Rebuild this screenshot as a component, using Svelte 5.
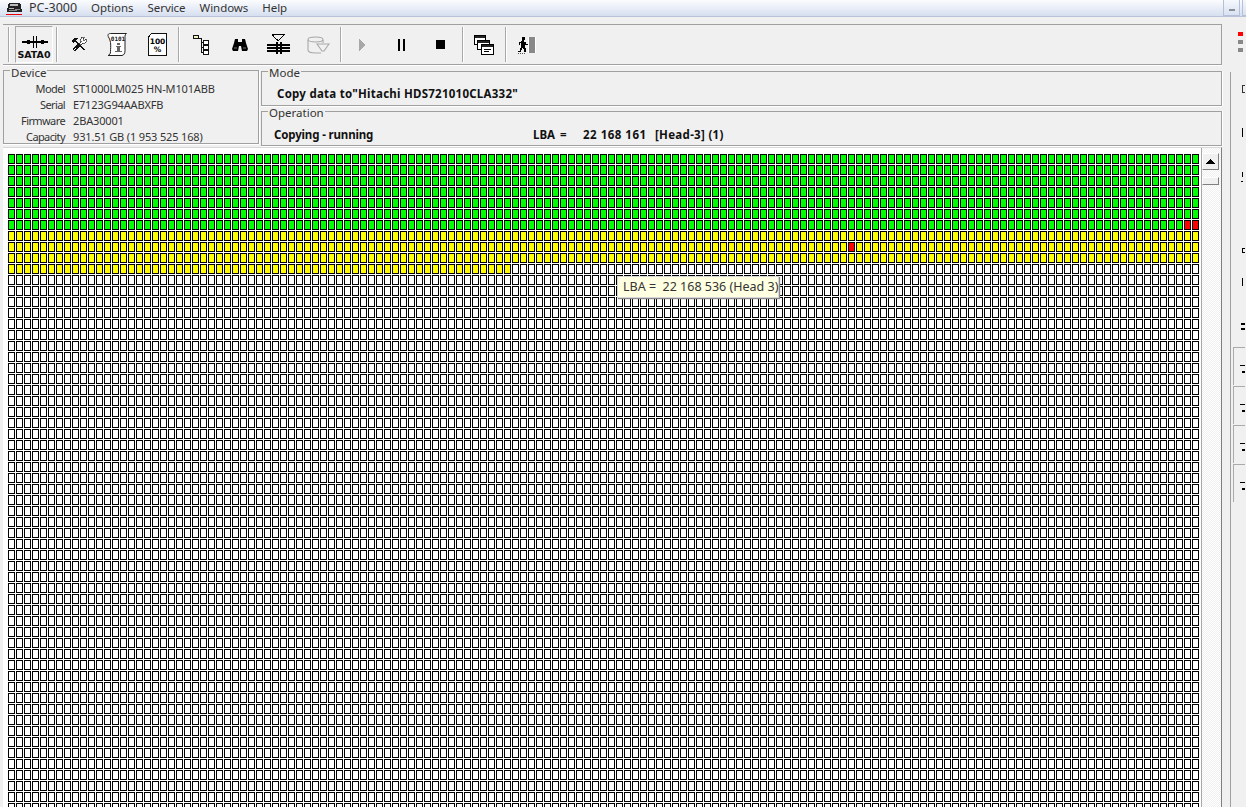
<script>
  const ROWS = 60;
  const COLS = 149;
  const cellClass = (r, c) => {
    if ((r === 6 && c >= 147) || (r === 8 && c === 105)) return 'r';
    if (r <= 6) return 'g';
    if (r <= 9 || (r === 10 && c <= 62)) return 'y';
    return '';
  };
  const cells = [];
  for (let r = 0; r < ROWS; r++) for (let c = 0; c < COLS; c++) cells.push(cellClass(r, c));
  const device = [
    ['Model', 'ST1000LM025 HN-M101ABB'],
    ['Serial', 'E7123G94AABXFB'],
    ['Firmware', '2BA30001'],
    ['Capacity', '931.51 GB (1 953 525 168)']
  ];
  const menu = ['Options', 'Service', 'Windows', 'Help'];
</script>

<div class="page">
  <header class="menubar">
    <svg class="logo" width="17" height="16" viewBox="0 0 17 16" shape-rendering="crispEdges">
      <path d="M3 3h11v1h1v5h1v3H1V8h1V4h1z" fill="#222"/>
      <path d="M4 4h8v2H4zM3 8h5v1H3z" fill="#bbb"/>
      <path d="M9 9h5v1H9zM3 10h8v1H3z" fill="#888"/>
      <rect x="0" y="14" width="16" height="1" fill="#e00"/>
    </svg>
    <span class="app-name">PC-3000</span>
    {#each menu as m}<span class="menu-item">{m}</span>{/each}
    <div class="winbtns">
      <div class="winbtn"><i></i></div>
      <div class="winbtn last"></div>
    </div>
  </header>

  <div class="workspace">
    <main class="main">
      <div class="toolbar">
        <div class="sep first"></div>
        <button class="tool sata">
          <svg width="36" height="18" viewBox="0 0 36 18" shape-rendering="crispEdges">
            <rect x="6" y="8" width="26" height="2" fill="#000"/>
            <rect x="11" y="7" width="3" height="4" fill="#000"/>
            <rect x="25" y="7" width="3" height="4" fill="#000"/>
            <rect x="17" y="3" width="1" height="12" fill="#000"/>
            <rect x="20" y="3" width="1" height="12" fill="#000"/>
          </svg>
          <span>SATA0</span>
        </button>
        <div class="sep"></div>

        <div class="tool">
          <svg width="16" height="15" viewBox="0 0 16 15" shape-rendering="crispEdges">
            <path d="M1 3h1V2h1V1h4v1H6v1H5v1h1v1h1v1h1v1h1v1h1v1h1v1h1v1h1v1h1v1h-2v-1h-1v-1h-1v-1H9V9H8V8H7V7H6V6H5V5H3v1H2V5H1z" fill="#111"/>
            <path d="M10 0h3v1h-1v2h2V2h1v3h-1v1h-3v1h-1v1H9V7H8V6h1V5h1V4H9V2h1z" fill="#fff" stroke="#111" stroke-width=".6"/>
            <path d="M7 8h1v1h1v1H8v1H7v1H6v1H5v1H3v-1H2v-2h1v-1h1V9h1V8h1V7h1z" fill="#111"/>
            <path d="M3 13h1v-1h1v-1H4v1H3z" fill="#fff"/>
          </svg>
        </div>
        <div class="tool">
          <svg width="22" height="23" viewBox="0 0 22 23">
            <path d="M3.500 .5h16c-1.500 1-1.500 2-1.500 4v13c0 3-1 4.500-3 5H1c1.500-.5 2.500-1.500 2.500-4 0-3 .5-5 0-9S1 4 1 2.500 2 .5 3.500 .5z" fill="#fff" stroke="#222"/>
            <text x="11" y="7.500" class="tiny">0101</text>
            <rect x="10" y="10" width="3" height="2" fill="#666"/>
            <rect x="9" y="13" width="5" height="1" fill="#666"/>
            <rect x="10" y="14" width="3" height="4" fill="#666"/>
            <rect x="8" y="18" width="7" height="1" fill="#666"/>
          </svg>
        </div>
        <div class="tool">
          <svg width="20" height="24" viewBox="0 0 20 24" shape-rendering="crispEdges">
            <path d="M4.500 .5h15v22h-18V4z" fill="#fff" stroke="#111"/>
            <text x="10.500" y="11" class="pct">100</text>
            <text x="10.500" y="19" class="pct">%</text>
          </svg>
        </div>
        <div class="sep"></div>

        <div class="tool">
          <svg width="16" height="20" viewBox="0 0 16 20" shape-rendering="crispEdges">
            <path d="M.5 .5h5v3h-5z" fill="#f3f3c0" stroke="#111"/>
            <path d="M5 3h3v1H5zM8 3h1v15H8zM9 7h2v1H9zM9 12h2v1H9zM9 17h2v1H9z" fill="#111"/>
            <path d="M10.500 5.500h5v4h-5zM10.500 10.500h5v4h-5zM10.500 15.500h5v4h-5z" fill="#fff" stroke="#111"/>
          </svg>
        </div>
        <div class="tool">
          <svg width="16" height="13" viewBox="0 0 16 13">
            <path d="M3 1h3v3h4V1h3l1 4 2 6-1 2H10L9 8H7L6 13H1L0 11l2-6z" fill="#000"/>
            <path d="M2 10h3M11 10h3" stroke="#777"/>
          </svg>
        </div>
        <div class="tool">
          <svg width="23" height="21" viewBox="0 0 23 21" shape-rendering="crispEdges">
            <path d="M5 0h13v1h-1v1h-1v1h-1v1h-1v1h-1v1h-1v1h-2V6H9V5H8V4H7V3H6V2H5z" fill="#000"/>
            <path d="M7 1h9v1h-1v1h-1v1h-1v1h-1v1h-1V5H9V4H8V3H7z" fill="#f0f0f0"/>
            <rect y="10" width="23" height="2" fill="#000"/>
            <rect y="13" width="23" height="2" fill="#000"/>
            <rect y="16" width="23" height="2" fill="#000"/>
            <rect x="9" y="8" width="2" height="12" fill="#000"/>
            <rect x="13" y="8" width="2" height="12" fill="#000"/>
          </svg>
        </div>
        <div class="tool disk">
          <svg width="23" height="18" viewBox="0 0 23 18" fill="none" stroke="#a8a8a8" stroke-width="1.1">
            <path d="M1 4v10c0 2 4 3 8 3h5"/>
            <ellipse cx="8.500" cy="3.500" rx="7.500" ry="2.500" fill="#f0f0f0"/>
            <path d="M16 4v3"/>
            <path d="M10 8h12l-5 7h-2z" fill="#f0f0f0"/>
          </svg>
        </div>
        <div class="sep"></div>

        <div class="tool">
          <svg width="8" height="12" viewBox="0 0 8 12" shape-rendering="crispEdges">
            <path d="M0 0h1v1h1v1h1v1h1v1h1v1h1v2H5v1H4v1H3v1H2v1H1v1H0z" fill="#a8a8a8"/>
          </svg>
        </div>
        <div class="tool">
          <svg width="8" height="12" viewBox="0 0 8 12" shape-rendering="crispEdges">
            <rect width="2" height="12" fill="#000"/>
            <rect x="5" width="2" height="12" fill="#000"/>
          </svg>
        </div>
        <div class="tool"><div class="stop"></div></div>
        <div class="sep"></div>

        <div class="tool narrow">
          <svg width="20" height="20" viewBox="0 0 20 20" shape-rendering="crispEdges">
            <g fill="#fff" stroke="#000">
              <rect x=".5" y=".5" width="11" height="9"/>
              <rect x="3.500" y="5.500" width="12" height="9"/>
              <rect x="7.500" y="9.500" width="12" height="10"/>
            </g>
            <rect x="1" y="1" width="10" height="2" fill="#222"/>
            <rect x="4" y="6" width="11" height="2" fill="#222"/>
            <rect x="8" y="10" width="11" height="2" fill="#222"/>
            <path d="M10 14h7v1h-7zM10 16h5v1h-5z" fill="#000"/>
          </svg>
        </div>
        <div class="sep"></div>

        <div class="tool narrow">
          <svg width="20" height="18" viewBox="0 0 20 18" shape-rendering="crispEdges">
            <rect x="11" y="1" width="8" height="16" fill="#fff"/>
            <rect x="12" y="1" width="6" height="16" class="dither"/>
            <path d="M5 1h3v3H7v2h2v2h2v1H8v3h1v4H7v-3H6v-1H5v2H4v2H1v-1h2v-3h1V7H3v2H2V6h2V5h1z" fill="#000"/>
            <path d="M1 17h1M3 17h1M5 17h1M7 17h1" stroke="#555"/>
          </svg>
        </div>
      </div>

      <section class="info">
        <div class="box device">
          <div class="legend dev-legend">Device</div>
          {#each device as [k, v]}
            <div class="dev-row"><span class="dev-k">{k}</span><span class="dev-v">{v}</span></div>
          {/each}
        </div>
        <div class="status">
          <div class="box mode">
            <div class="legend">Mode</div>
            <div class="mode-text">Copy data to"Hitachi HDS721010CLA332"</div>
          </div>
          <div class="box operation">
            <div class="legend">Operation</div>
            <div class="op-text">
              <span class="op-state">Copying - running</span>
              <span class="op-lba">LBA =</span>
              <span class="op-num">22 168 161</span>
              <span class="op-head">[Head-3] (1)</span>
            </div>
          </div>
        </div>
      </section>

      <section class="map">
        <div class="grid">
          {#each cells as c}<b class={c}></b>{/each}
        </div>
        <div class="scroll">
          <div class="sb-btn"><svg width="9" height="5" viewBox="0 0 9 5" shape-rendering="crispEdges"><path d="M4 0h1v1h1v1h1v1h1v1h1v1H0V4h1V3h1V2h1V1h1z"/></svg></div>
          <div class="sb-thumb"></div>
        </div>
        <div class="tooltip">LBA =  22 168 536 (Head 3)</div>
      </section>
    </main>

    <aside class="side">
      <svg width="15" height="790" viewBox="0 0 15 790" shape-rendering="crispEdges">
        <rect x="8" y="15" width="5" height="4" fill="#f00"/>
        <rect x="8" y="23" width="5" height="4" fill="#888"/>
        <rect x="8" y="31" width="5" height="4" fill="#888"/>
        <path d="M13 68h2v1h-2v6h2v1h-3v-8z" fill="#333"/>
        <rect x="12" y="111" width="1" height="9" fill="#000"/>
        <path d="M12 155h1v9h-2v1h2z" fill="#000"/>
        <path d="M12 231h3v1h-2v3h2v1h-3z" fill="#000"/>
        <rect x="12" y="261" width="1" height="8" fill="#000"/>
        <rect x="11" y="306" width="4" height="2" fill="#000"/>
        <rect x="11" y="311" width="4" height="2" fill="#000"/>
        {#each [330, 369, 408, 447] as y}
          <path d={`M3.500 ${y + 38}V${y}.5H15`} fill="none" stroke="#aaa"/>
          <rect x="10" y={y + 18} width="5" height="1" fill="#000"/>
          <rect x="12" y={y + 24} width="3" height="2" fill="#000"/>
        {/each}
      </svg>
    </aside>
  </div>
</div>

<style>
  :global(body) { margin: 0; background: #f0f0f0; }
  .page {
    width: 1246px; height: 807px; overflow: hidden; background: #f0f0f0;
    font: 12px/16px "Noto Sans", sans-serif; color: #222;
  }
  .menubar {
    height: 16px; display: flex; align-items: center;
    background: linear-gradient(#fbfcfe, #d6dff0); border-bottom: 1px solid #b9c2d8;
    padding-left: 6px; color: #333;
  }
  .logo { flex: none; }
  .app-name { margin: 0 14px 0 6px; font-size: 12.500px; }
  .menu-item { margin-right: 14px; font-size: 11.500px; letter-spacing: -.05px; }
  .winbtns { margin-left: auto; display: flex; height: 17px; gap: 2px; }
  .winbtn {
    width: 17px; height: 16px; box-sizing: border-box; border: 1px solid #b5bfd6; border-top: 0;
    background: linear-gradient(#f6f8fc, #d8e2f2); display: flex; justify-content: center; align-items: flex-end;
  }
  .winbtn.last { width: 4px; border-right: 0; }
  .winbtn i { width: 6px; height: 2px; background: #8a8f99; margin-bottom: 4px; }

  .workspace { display: flex; height: 790px; }
  .main { width: 1222px; padding-left: 3px; box-sizing: border-box; flex: none; }

  .toolbar {
    height: 41px; margin-top: 7px; box-sizing: border-box; width: 1219px;
    border: 1px solid #a0a0a0; border-left: 0;
    box-shadow: 0 1px 0 #fff;
    display: flex; align-items: center; padding-left: 5px;
  }
  .sep { width: 1px; height: 35px; background: #a8a8a8; border-right: 1px solid #fff; margin: 0 1px 0 2px; flex: none; }
  .sep.first { margin: 0 5px 0 0; }
  .tool {
    width: 39px; height: 37px; flex: none; display: flex; align-items: center; justify-content: center;
    padding: 0; margin: 0; background: none; border: 0;
  }
  .tool.narrow { width: 38px; }
  .tool.disk { width: 40px; }
  .tool.sata {
    width: 38px; box-sizing: border-box; flex-direction: column; justify-content: flex-start;
    border: 1px solid; border-color: #a8a8a8 #fff #fff #a8a8a8; font: bold 9.500px/12px "DejaVu Sans", sans-serif; color: #111;
    padding-top: 6px; margin-right: 1px;
  }
  .tool.sata span { margin-top: -2px; }
  .tiny { font: bold 6px "DejaVu Sans Mono", monospace; text-anchor: middle; fill: #222; }
  .pct { font: bold 7.500px "DejaVu Sans", sans-serif; text-anchor: middle; fill: #000; }
  .stop { width: 9px; height: 9px; background: #000; }
  .dither { fill: #888; }

  .info { display: flex; gap: 2px; margin-top: 5px; height: 75px; }
  .box {
    position: relative; box-sizing: border-box;
    border: 1px solid #a0a0a0; box-shadow: 0 1px 0 #fff, 1px 0 0 #fff;
  }
  .legend {
    position: absolute; left: 6px; top: -5px; padding: 0 1px; background: #f0f0f0;
    font-size: 11.500px; line-height: 12px; color: #333;
  }
  .dev-legend { top: -4px; }
  .device { width: 256px; height: 74px; padding-top: 10px; flex: none; }
  .dev-row { display: flex; height: 16px; font-size: 11px; color: #333; }
  .dev-k { width: 61px; text-align: right; letter-spacing: -.6px; }
  .dev-v { margin-left: 8px; white-space: nowrap; letter-spacing: -.15px; }
  .status { width: 961px; flex: none; }
  .mode { height: 35px; margin-top: 1px; }
  .operation { height: 35px; margin-top: 5px; }
  .mode-text { font-weight: 700; font-size: 11.500px; letter-spacing: .25px; margin: 14px 0 0 15px; color: #111; }
  .op-text { font-weight: 700; font-size: 11.500px; margin: 15px 0 0 12px; color: #111; display: flex; white-space: pre; }
  .op-state { width: 259px; letter-spacing: -.15px; }
  .op-lba { width: 50px; word-spacing: 2px; }
  .op-num { width: 72px; letter-spacing: .5px; }
  .op-head { letter-spacing: .3px; }

  .map {
    position: relative; height: 664px; margin: 2px 0 0 0; width: 1219px; box-sizing: border-box;
    display: flex; background: #fff; border-top: 1px solid #d8d8d8; border-right: 1px solid #808080;
    overflow: hidden; padding-left: 5px;
  }
  .grid {
    display: grid; grid-template-columns: repeat(149, 7px); grid-auto-rows: 10px; gap: 1px;
    padding-top: 6px; width: 1193px; flex: none; align-content: start;
  }
  .grid b { display: block; border: 1px solid #000; background: #fff; }
  .grid b.g { background: #0f0; }
  .grid b.y { background: #ff0; }
  .grid b.r { background: #f00; }
  .scroll {
    flex: 1; padding: 5px 2px 0 0; border-left: 1px solid #a8a8a8;
    background: repeating-conic-gradient(#f0f0f0 0 25%, #fff 0 50%) 0 0 / 2px 2px;
    display: flex; flex-direction: column; align-items: center;
  }
  .sb-btn, .sb-thumb {
    width: 17px; box-sizing: border-box; background: #f0f0f0;
    border: 1px solid; border-color: #fff #808080 #808080 #fff;
  }
  .sb-btn { height: 17px; display: flex; align-items: center; justify-content: center; flex: none; }
  .sb-thumb { height: 8px; margin-top: 7px; flex: none; }
  .tooltip {
    position: absolute; left: 614px; top: 128px; width: 162px; height: 22px; box-sizing: border-box;
    padding: 2px 0 0 5px; background: #ffffe1; border: 1px solid #d8d8d8; box-shadow: 1px 1px 1px #888;
    white-space: pre; font-size: 12.500px; color: #333;
  }
  .side {
    flex: none; width: 24px; height: 790px; box-sizing: border-box;
    padding-left: 8px; overflow: hidden; position: relative;
  }
  .side::before {
    content: ""; position: absolute; left: 8px; top: 55px; bottom: 0; width: 1px; background: #a0a0a0;
  }
</style>
